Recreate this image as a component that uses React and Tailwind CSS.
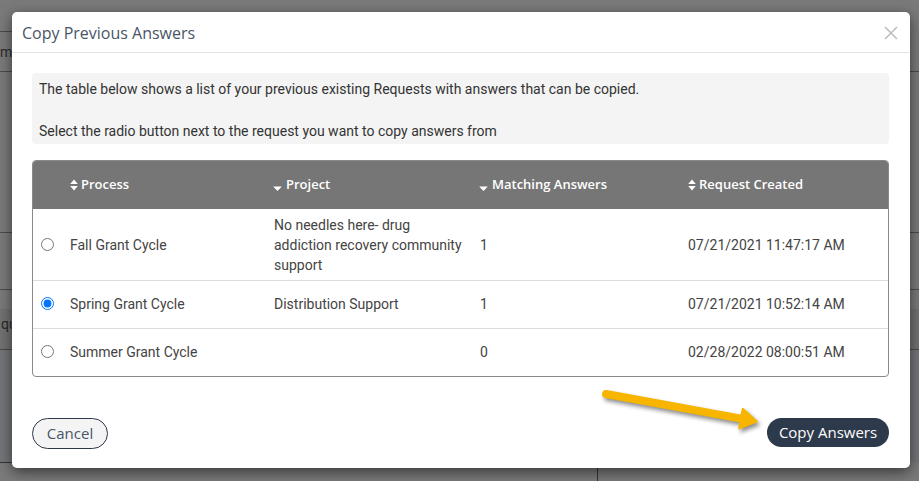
import React, { useState } from "react";

const rows = [
  {
    id: 1,
    process: "Fall Grant Cycle",
    project: "No needles here- drug addiction recovery community support",
    matching: "1",
    created: "07/21/2021 11:47:17 AM",
  },
  {
    id: 2,
    process: "Spring Grant Cycle",
    project: "Distribution Support",
    matching: "1",
    created: "07/21/2021 10:52:14 AM",
  },
  {
    id: 3,
    process: "Summer Grant Cycle",
    project: "",
    matching: "0",
    created: "02/28/2022 08:00:51 AM",
  },
];

function SortBoth() {
  return (
    <svg width="8" height="12" viewBox="0 0 8 12" className="mr-[3px]">
      <path d="M4 0.5 L7.8 5 L0.2 5 Z" fill="#fff" />
      <path d="M4 11.5 L7.8 7 L0.2 7 Z" fill="#fff" />
    </svg>
  );
}

function SortDown() {
  return (
    <svg width="9" height="12" viewBox="0 0 9 12" className="mr-[4px] mt-[3px]">
      <path d="M4.5 10 L8.8 5.5 L0.2 5.5 Z" fill="#fff" />
    </svg>
  );
}

export default function App() {
  const [selected, setSelected] = useState(2);
  const poppins = { fontFamily: "'Open Sans', 'Noto Sans', sans-serif" };

  return (
    <div className="relative w-[919px] h-[481px] overflow-hidden bg-[#7a7a7a] font-['Roboto',sans-serif]">
      {/* page behind the overlay */}
      <div className="flex flex-col">
        <div className="h-[32px]" />
        <div className="h-[40px] border-t border-[#4a4a4a] w-[14px] text-[14px] text-[#2a2a2a] leading-[40px] -mt-px">
          m
        </div>
        <div className="h-[161px] border-t border-[#4a4a4a]" />
        <div className="h-[57px] border-t border-[#4a4a4a]" />
        <div className="h-[20px] border-t border-[#4a4a4a]" />
        <div className="h-[40px] bg-[#727272] text-[14px] text-[#2a2a2a] leading-[30px] pl-[1px]">
          qu
        </div>
        <div className="h-[113px] border-t border-[#4a4a4a] bg-[#737578]" />
        <div className="flex h-[20px]">
          <div className="w-[20px] border-t border-[#333]" />
          <div className="w-[577px]" />
          <div className="mt-[5px] h-[15px] border-l border-[#333]" />
        </div>
      </div>

      {/* overlay + modal */}
      <div className="absolute inset-0 pl-[12px] pt-[12px]">
        <div className="w-[898px] h-[456px] bg-white rounded-[5px] shadow-[0_4px_14px_rgba(0,0,0,0.55)] flex flex-col">
          <div className="h-[41px] flex items-center justify-between pl-[10px] pr-[12px] border-b border-[#e3e3e3]">
            <div className="text-[16px] text-[#4a5568] pt-[1px]" style={poppins}>
              Copy Previous Answers
            </div>
            <svg width="14" height="14" viewBox="0 0 14 14" className="mt-[2px]">
              <path d="M1 1 L13 13 M13 1 L1 13" stroke="#bdbdbd" strokeWidth="1.6" />
            </svg>
          </div>

          <div className="px-[20px] pt-[20px] pr-[21px]">
            <div className="bg-[#f4f4f4] rounded-[4px] px-[7px] pt-[6px] h-[71px] text-[14px] leading-[21px] text-[#333]">
              The table below shows a list of your previous existing Requests with answers that can be copied.
              <br />
              <br />
              Select the radio button next to the request you want to copy answers from
            </div>

            <div className="mt-[16px] border border-[#8a8a8a] rounded-[4px] overflow-hidden">
              <div
                className="grid grid-cols-[29px_204px_205px_209px_1fr] h-[48px] bg-[#767676] text-white text-[13px] font-semibold items-center"
                style={poppins}
              >
                <div />
                <div className="flex items-center pl-[8px]">
                  <SortBoth />
                  Process
                </div>
                <div className="flex items-center pl-[7px]">
                  <SortDown />
                  Project
                </div>
                <div className="flex items-center pl-[8px]">
                  <SortDown />
                  Matching Answers
                </div>
                <div className="flex items-center pl-[8px]">
                  <SortBoth />
                  Request Created
                </div>
              </div>
              {rows.map((r, i) => (
                <div
                  key={r.id}
                  className={`grid grid-cols-[29px_204px_205px_209px_1fr] items-center text-[14px] leading-[20px] text-[#444] ${
                    i > 0 ? "border-t border-[#dcdcdc] pb-[2px]" : ""
                  } ${i === 0 ? "py-[4px] h-[71px]" : "h-[48px]"}`}
                >
                  <div className="flex justify-center">
                    <input
                      type="radio"
                      name="req"
                      checked={selected === r.id}
                      onChange={() => setSelected(r.id)}
                      className="w-[13px] h-[13px] m-0"
                    />
                  </div>
                  <div className="pl-[8px]">{r.process}</div>
                  <div className="pl-[8px] pr-[2px]">{r.project}</div>
                  <div className="pl-[9px]">{r.matching}</div>
                  <div className="pl-[8px]">{r.created}</div>
                </div>
              ))}
            </div>
          </div>

          <div className="flex justify-between items-start px-[20px] pr-[21px] mt-[41px]">
            <button
              className="w-[76px] h-[31px] rounded-full border border-[#2d3748] bg-[#f4f4f5] text-[15px] text-[#4a5568]"
              style={poppins}
            >
              Cancel
            </button>
            <button
              className="w-[122px] h-[29px] rounded-full bg-[#2d3a4b] text-[15px] text-white font-medium"
              style={poppins}
            >
              Copy Answers
            </button>
          </div>
        </div>
      </div>

      {/* annotation arrow */}
      <svg
        width="170"
        height="50"
        viewBox="0 0 170 50"
        className="absolute left-[598px] top-[386px] drop-shadow-[2px_3px_2px_rgba(0,0,0,0.45)]"
      >
        <path d="M8 8 L143 32.6" stroke="#f7b500" strokeWidth="8" strokeLinecap="round" />
        <path d="M141.2 42.4 L144.8 22.8 L158.7 35.5 Z" fill="#f7b500" stroke="#f7b500" strokeWidth="2" strokeLinejoin="round" />
      </svg>
    </div>
  );
}
